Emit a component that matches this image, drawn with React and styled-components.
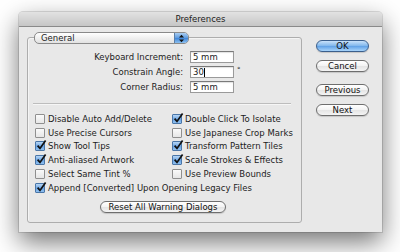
import React from 'react';
import styled, { createGlobalStyle } from 'styled-components';

const $text = '#1c1c1c';
const $window = '#e8e8e8';
const $font = `'DejaVu Sans', 'Liberation Sans', sans-serif`;

const GlobalStyle = createGlobalStyle`
  html, body {
    margin: 0;
    background: #ffffff;
  }
  body {
    font-family: ${$font};
    font-size: 8.5px;
    color: ${$text};
  }
`;

const Page = styled.div`
  padding: 12px 0 0 19px;
  height: 252px;
  box-sizing: border-box;
  overflow: hidden;
`;

const Window = styled.div`
  width: 363px;
  height: 220px;
  background: ${$window};
  border-radius: 4px 4px 0 0;
  box-shadow: 0 10px 26px rgba(0, 0, 0, 0.55), 0 0 0 1px rgba(0, 0, 0, 0.12);
  display: flex;
  flex-direction: column;
`;

const TitleBar = styled.div`
  height: 14px;
  line-height: 14px;
  text-align: center;
  font-size: 8.5px;
  color: #222;
  background: linear-gradient(#e2e2e2, #c6c6c6);
  border-bottom: 1px solid #8a8a8a;
  border-radius: 4px 4px 0 0;
`;

const Body = styled.div`
  display: flex;
  padding: 10px 13px 8px 8px;
`;

const Panel = styled.div`
  width: 275px;
  height: 186px;
  box-sizing: border-box;
  border: 1px solid #adadad;
  border-radius: 3px;
  box-shadow: inset 1px 1px 0 #f4f4f4;
  display: flex;
  flex-direction: column;
`;

const Popup = styled.div`
  margin: -6px 0 0 6px;
  width: 155px;
  height: 12px;
  box-sizing: border-box;
  border: 1px solid #8a8a8a;
  border-radius: 5px;
  background: linear-gradient(#ffffff, #f0f0f0 50%, #e2e2e2);
  display: flex;
  align-items: center;
  overflow: hidden;
`;

const PopupLabel = styled.span`
  flex: 1;
  padding-left: 6px;
  line-height: 10px;
`;

const Stepper = styled.div`
  width: 13px;
  height: 100%;
  background: linear-gradient(#a9cdf2, #5b9ae0 50%, #3d84d8 51%, #8cc0f0);
  border-left: 1px solid #5b7fa8;
  display: flex;
  align-items: center;
  justify-content: center;
`;

const Fields = styled.div`
  display: grid;
  grid-template-columns: 155px 44px 10px;
  column-gap: 7px;
  row-gap: 3px;
  margin-top: 7px;
  align-items: center;
`;

const FieldLabel = styled.span`
  text-align: right;
  line-height: 12px;
`;

const Input = styled.div`
  height: 12px;
  box-sizing: border-box;
  background: #ffffff;
  border: 1px solid #9a9a9a;
  border-top-color: #7a7a7a;
  box-shadow: inset 0 1px 1px rgba(0, 0, 0, 0.12);
  padding-left: 2px;
  line-height: 10px;
  display: flex;
  align-items: center;
`;

const Caret = styled.span`
  display: inline-block;
  width: 1px;
  height: 9px;
  background: #000;
`;

const Unit = styled.span`
  font-size: 7px;
  align-self: start;
  margin-left: -4px;
`;

const Separator = styled.div`
  height: 1px;
  background: #bdbdbd;
  border-bottom: 1px solid #f6f6f6;
  margin: 10px 10px 0 5px;
`;

const Checks = styled.div`
  display: grid;
  grid-template-columns: 137px 1fr;
  grid-auto-rows: 13.8px;
  padding: 7px 0 0 7px;
`;

const CheckRow = styled.label`
  display: flex;
  align-items: center;
  gap: 3px;
  white-space: nowrap;
  grid-column: ${(p) => (p.$wide ? '1 / span 2' : 'auto')};
`;

const Box = styled.span`
  width: 8px;
  height: 8px;
  border: 1px solid ${(p) => (p.$on ? '#4a76a8' : '#8f8f8f')};
  border-radius: 1px;
  background: ${(p) =>
    p.$on
      ? 'linear-gradient(#b7d6f5, #6aa4e4 55%, #8fc0f0)'
      : 'linear-gradient(#fafafa, #e6e6e6)'};
  position: relative;
  flex: none;
`;

const Tick = styled.svg`
  position: absolute;
  left: 0;
  top: -2px;
  width: 10px;
  height: 10px;
  overflow: visible;
`;

const ResetWrap = styled.div`
  display: flex;
  justify-content: center;
  margin: 6px 0 0 -3px;
`;

const Button = styled.div`
  width: ${(p) => p.$w || 53}px;
  height: 12px;
  box-sizing: border-box;
  border: 1px solid ${(p) => (p.$primary ? '#3b5f8c' : '#6e6e6e')};
  border-radius: 6px;
  background: ${(p) =>
    p.$primary
      ? 'linear-gradient(#c9e2fa, #7fb6ec 50%, #5fa0e6 51%, #a8d4fa)'
      : 'linear-gradient(#ffffff, #f3f3f3 50%, #e4e4e4 51%, #f4f4f4)'};
  box-shadow: 0 1px 1px rgba(0, 0, 0, 0.15);
  display: flex;
  align-items: center;
  justify-content: center;
  line-height: 10px;
  color: #111;
`;

const ButtonColumn = styled.div`
  display: flex;
  flex-direction: column;
  margin: 3px 0 0 14px;
  gap: 8px;

  & > :nth-child(3) {
    margin-top: 4px;
  }
`;

const Arrows = () => (
  <svg width="7" height="9" viewBox="0 0 7 9">
    <path d="M3.5 0.8 L6 3.4 L1 3.4 Z" fill="#111" />
    <path d="M3.5 8.2 L6 5.6 L1 5.6 Z" fill="#111" />
  </svg>
);

const Check = ({ on, label, wide }) => (
  <CheckRow $wide={wide}>
    <Box $on={on}>
      {on && (
        <Tick viewBox="0 0 10 10">
          <path d="M1.6 5.6 L4 8.4 L9.6 0.6" stroke="#111" strokeWidth="1.7" fill="none" />
        </Tick>
      )}
    </Box>
    {label}
  </CheckRow>
);

const CHECKS = [
  [false, 'Disable Auto Add/Delete'],
  [true, 'Double Click To Isolate'],
  [false, 'Use Precise Cursors'],
  [false, 'Use Japanese Crop Marks'],
  [true, 'Show Tool Tips'],
  [true, 'Transform Pattern Tiles'],
  [true, 'Anti-aliased Artwork'],
  [true, 'Scale Strokes & Effects'],
  [false, 'Select Same Tint %'],
  [false, 'Use Preview Bounds'],
];

const App = () => (
  <Page>
    <GlobalStyle />
    <Window>
      <TitleBar>Preferences</TitleBar>
      <Body>
        <Panel>
          <Popup>
            <PopupLabel>General</PopupLabel>
            <Stepper>
              <Arrows />
            </Stepper>
          </Popup>
          <Fields>
            <FieldLabel>Keyboard Increment:</FieldLabel>
            <Input>5 mm</Input>
            <span />
            <FieldLabel>Constrain Angle:</FieldLabel>
            <Input>
              30<Caret />
            </Input>
            <Unit>°</Unit>
            <FieldLabel>Corner Radius:</FieldLabel>
            <Input>5 mm</Input>
            <span />
          </Fields>
          <Separator />
          <Checks>
            {CHECKS.map(([on, label]) => (
              <Check key={label} on={on} label={label} />
            ))}
            <Check wide on label="Append [Converted] Upon Opening Legacy Files" />
          </Checks>
          <ResetWrap>
            <Button $w={126}>Reset All Warning Dialogs</Button>
          </ResetWrap>
        </Panel>
        <ButtonColumn>
          <Button $primary>OK</Button>
          <Button>Cancel</Button>
          <Button>Previous</Button>
          <Button>Next</Button>
        </ButtonColumn>
      </Body>
    </Window>
  </Page>
);

export default App;
